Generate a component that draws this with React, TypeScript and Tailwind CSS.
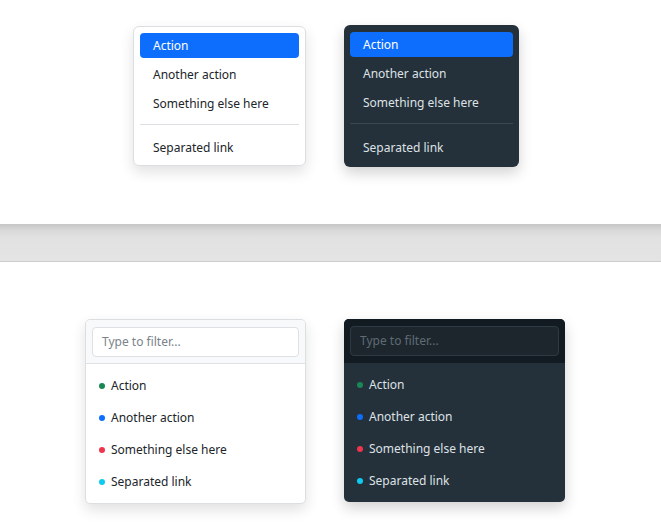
import React from "react";

const font = { fontFamily: '"Noto Sans", "Open Sans", Arial, sans-serif' };

function Menu({ dark }: { dark?: boolean }) {
  const base = dark ? "text-[#dee2e6]" : "text-[#212529]";
  return (
    <div
      className={
        "flex flex-col rounded-[6px] px-[6px] text-[12px] " +
        (dark
          ? "w-[175px] pt-[7px] pb-[7px] bg-[#24303a] shadow-[0_6px_14px_rgba(0,0,0,0.18)]"
          : "w-[173px] pt-[6px] pb-[5px] bg-white border border-[#dcdfe2] shadow-[0_6px_14px_rgba(0,0,0,0.12)]")
      }
    >
      <div className="h-[25px] flex items-center px-[13px] rounded-[4px] bg-[#0d6efd] text-white">Action</div>
      <div className={"h-[25px] mt-[4px] flex items-center px-[13px] " + base}>Another action</div>
      <div className={"h-[25px] mt-[4px] flex items-center px-[13px] " + base}>Something else here</div>
      <div className={"h-px mt-[8px] " + (dark ? "mb-[11px] bg-[#3a4650]" : "mb-[10px] bg-[#dcdfe2]")} />
      <div className={"h-[25px] flex items-center px-[13px] " + base}>Separated link</div>
    </div>
  );
}

const items = [
  { label: "Action", color: "bg-[#198754]" },
  { label: "Another action", color: "bg-[#0d6efd]" },
  { label: "Something else here", color: "bg-[#f0344e]" },
  { label: "Separated link", color: "bg-[#0dcaf0]" },
];

function FilterMenu({ dark }: { dark?: boolean }) {
  return (
    <div
      className={
        "flex flex-col w-[221px] rounded-[5px] overflow-hidden text-[12px] " +
        (dark
          ? "bg-[#24303a] shadow-[0_6px_14px_rgba(0,0,0,0.18)]"
          : "bg-white border border-[#dcdfe2] shadow-[0_6px_14px_rgba(0,0,0,0.12)]")
      }
    >
      <div
        className={
          "pt-[7px] pb-[6px] border-b " +
          (dark ? "px-[6px] bg-[#121b21] border-[#121b21]" : "px-[6px] bg-[#f8f9fa] border-[#dee2e6]")
        }
      >
        <div
          className={
            "h-[30px] rounded-[4px] border flex items-center px-[9px] " +
            (dark
              ? "bg-[#1d262d] border-[#2e3a43] text-[#5f6b74]"
              : "bg-white border-[#dde1e5] text-[#7a838b]")
          }
        >
          Type to filter...
        </div>
      </div>
      <div className="flex flex-col pt-[6px] pb-[5px]">
        {items.map((it) => (
          <div
            key={it.label}
            className={
              "h-[32px] flex items-center pl-[13px] gap-[6px] " +
              (dark ? "text-[#dee2e6]" : "text-[#212529]")
            }
          >
            <span className={"w-[6px] h-[6px] rounded-full " + it.color} />
            <span>{it.label}</span>
          </div>
        ))}
      </div>
    </div>
  );
}

export default function App() {
  return (
    <div className="w-[661px] h-[529px] bg-white overflow-hidden" style={font}>
      <div className="h-[224px] pt-[26px] pl-[133px] flex items-start gap-[38px]">
        <Menu />
        <div className="-mt-px">
          <Menu dark />
        </div>
      </div>
      <div className="h-[38px] bg-[linear-gradient(to_bottom,#c6c6c6_0px,#d8d8d8_6px,#e2e2e2_14px,#e4e4e4_100%)] border-b border-[#cdcdcd]" />
      <div className="pt-[57px] pl-[85px] flex items-start gap-[38px]">
        <FilterMenu />
        <FilterMenu dark />
      </div>
    </div>
  );
}
